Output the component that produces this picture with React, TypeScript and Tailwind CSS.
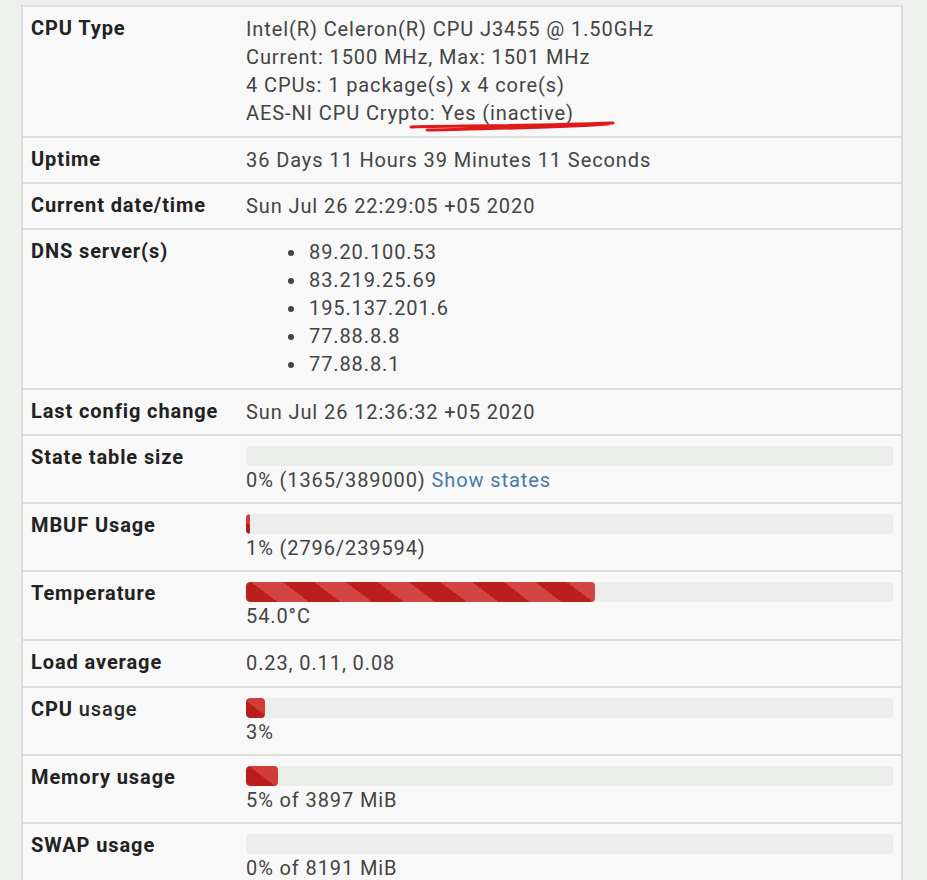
import React from 'react';

type Bar = { pct: number; striped?: boolean };

const dns = ['89.20.100.53', '83.219.25.69', '195.137.201.6', '77.88.8.8', '77.88.8.1'];

function Progress({ pct, striped }: Bar) {
  return (
    <div className="h-5 w-full rounded-[4px] bg-[#ebedeb] overflow-hidden">
      {pct > 0 && (
        <div
          className={
            striped
              ? 'h-full rounded-[4px] bg-[repeating-linear-gradient(37deg,#bb1f1c_0px,#bb1f1c_19px,#d24542_19px,#d24542_38px)]'
              : 'h-full rounded-[4px] bg-[linear-gradient(37deg,#b91c1a_50%,#d03c39_50%)]'
          }
          style={{ width: `${pct}%` }}
        />
      )}
    </div>
  );
}

function Row({ label, children, pb = 'pb-2' }: { label: React.ReactNode; children: React.ReactNode; pb?: string }) {
  return (
    <div className={`grid grid-cols-[215px_1fr] border-t-2 border-[#dcdedc] pl-[8px] pr-[8px] pt-2 ${pb}`}>
      <div className="font-bold text-[#222] leading-[28px] tracking-[0.9px] -mt-[1px]">{label}</div>
      <div className="text-[#444] leading-[28px] tracking-[0.9px]">{children}</div>
    </div>
  );
}

export default function App() {
  return (
    <div className="h-[880px] overflow-hidden bg-[#eef0ee] pl-[21px] pr-[24px] pt-[5px] font-['Roboto',sans-serif] text-[20px]">
      <div className="relative border-l-2 border-r-2 border-[#d9dbd9] bg-[#f7f8f7] min-h-[900px]">
        <Row label="CPU Type" pb="pb-[9px]">
          <div>Intel(R) Celeron(R) CPU J3455 @ 1.50GHz</div>
          <div>Current: 1500 MHz, Max: 1501 MHz</div>
          <div>4 CPUs: 1 package(s) x 4 core(s)</div>
          <div>AES-NI CPU Crypto: Yes (inactive)</div>
        </Row>
        <Row label="Uptime">36 Days 11 Hours 39 Minutes 11 Seconds</Row>
        <Row label="Current date/time">Sun Jul 26 22:29:05 +05 2020</Row>
        <Row label="DNS server(s)" pb="pb-[10px]">
          <ul className="list-disc pl-[61px] marker:text-[#444]">
            {dns.map((d) => (
              <li key={d} className="pl-[2px]">{d}</li>
            ))}
          </ul>
        </Row>
        <Row label="Last config change">Sun Jul 26 12:36:32 +05 2020</Row>
        <Row label="State table size">
          <div className="pt-[2px]">
            <Progress pct={0} />
            <div>
              0% (1365/389000) <span className="text-[#4a7ba6]">Show states</span>
            </div>
          </div>
        </Row>
        <Row label="MBUF Usage">
          <div className="pt-[2px]">
            <Progress pct={0.6} />
            <div>1% (2796/239594)</div>
          </div>
        </Row>
        <Row label="Temperature" pb="pb-[9px]">
          <div className="pt-[2px]">
            <Progress pct={54} striped />
            <div>54.0°C</div>
          </div>
        </Row>
        <Row label="Load average" pb="pb-[9px]">0.23, 0.11, 0.08</Row>
        <Row label={<>CPU <span className="font-medium text-[#2a2a2a]">usage</span></>}>
          <div className="pt-[2px]">
            <Progress pct={3} />
            <div>3%</div>
          </div>
        </Row>
        <Row label="Memory usage">
          <div className="pt-[2px]">
            <Progress pct={5} />
            <div>5% of 3897 MiB</div>
          </div>
        </Row>
        <Row label="SWAP usage">
          <div className="pt-[2px]">
            <Progress pct={0} />
            <div>0% of 8191 MiB</div>
          </div>
        </Row>
        {/* hand-drawn red underline */}
        <svg className="absolute left-[386px] top-[113px] w-[210px] h-[18px] pointer-events-none" viewBox="0 0 210 18">
          <path d="M2 9 C 30 8, 120 8, 204 5 M 18 12 C 60 11, 140 10, 200 6" stroke="#e0191b" strokeWidth="3" fill="none" strokeLinecap="round" />
        </svg>
      </div>
    </div>
  );
}
